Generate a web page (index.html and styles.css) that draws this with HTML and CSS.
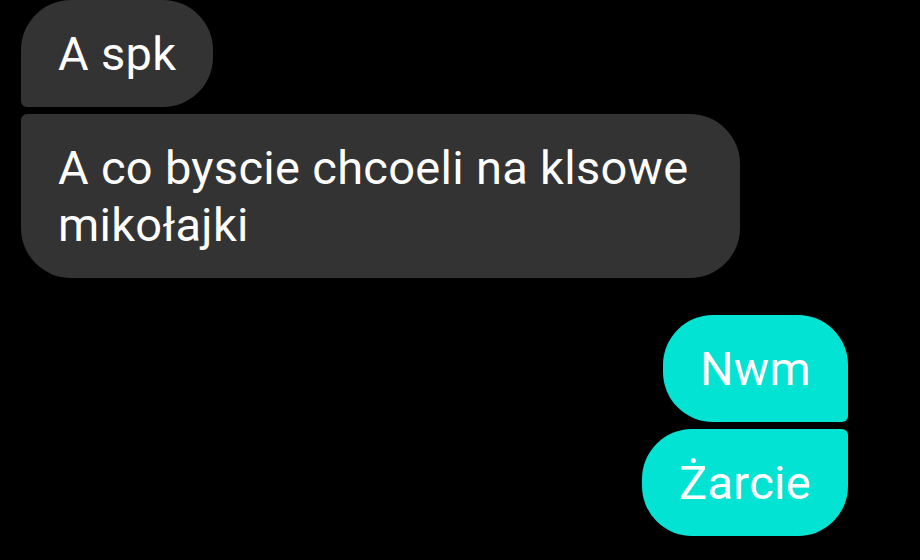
FILE: index.html
```html
<!DOCTYPE html>
<html>
<head>
    <title>Chat</title>
    <link rel="stylesheet" href="styles.css">
</head>
<body>
    <div class="chat">
        <!-- Incoming -->
        <div class="group in">
            <div class="bubble first">A spk</div>
            <div class="bubble last">A co byscie chcoeli na klsowe mikołajki</div>
        </div>

        <!-- Outgoing -->
        <div class="group out">
            <div class="bubble first">Nwm</div>
            <div class="bubble last">Żarcie</div>
        </div>
    </div>
</body>
</html>
```

FILE: styles.css
```css
body { margin: 0; background: #000; font-family: Roboto, "Noto Sans", sans-serif; }
.chat { width: 920px; height: 560px; box-sizing: border-box; padding: 0 72px 0 21px; display: flex; flex-direction: column; gap: 37px; overflow: hidden; }
.group { display: flex; flex-direction: column; gap: 7px; }
.group.in { align-items: flex-start; }
.group.out { align-items: flex-end; }
.bubble { max-width: 719px; box-sizing: border-box; padding: 25px 37px; font-size: 47px; line-height: 57px; letter-spacing: 0.3px; color: #fff; border-radius: 50px; }
.in .bubble { background: #333333; }
.out .bubble { background: #03e3d3; }
.in .first { border-bottom-left-radius: 6px; }
.in .last { border-top-left-radius: 6px; }
.out .first { border-bottom-right-radius: 6px; }
.out .last { border-top-right-radius: 6px; }
```
